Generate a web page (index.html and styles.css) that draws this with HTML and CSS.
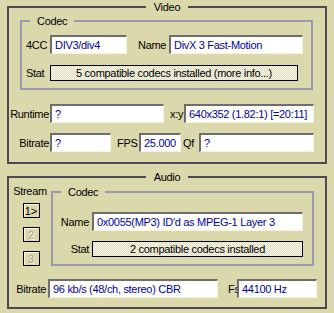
FILE: index.html
```html
<!DOCTYPE html>
<html lang="en">
<head>
  <meta charset="UTF-8">
  <title>Media Info</title>
  <link rel="stylesheet" href="styles.css">
</head>
<body>

  <fieldset class="group">
    <legend class="group-title">Video</legend>

    <fieldset class="codec codec-video">
      <legend class="codec-title">Codec</legend>
      <div class="row">
        <label class="lbl lbl-4cc">4CC</label>
        <input class="field w-4cc" type="text" value="DIV3/div4" readonly>
        <label class="lbl lbl-name">Name</label>
        <input class="field w-vname" type="text" value="DivX 3 Fast-Motion" readonly>
      </div>
      <div class="row row-stat">
        <label class="lbl lbl-4cc">Stat</label>
        <div class="stat w-vstat">5 compatible codecs installed (more info...)</div>
      </div>
    </fieldset>

    <div class="row row-runtime">
      <label class="lbl lbl-main">Runtime</label>
      <input class="field w-runtime" type="text" value="?" readonly>
      <label class="lbl lbl-xy">x:y</label>
      <input class="field w-xy" type="text" value="640x352 (1.82:1) [=20:11]" readonly>
    </div>
    <div class="row row-bitrate">
      <label class="lbl lbl-main">Bitrate</label>
      <input class="field w-vbitrate" type="text" value="?" readonly>
      <label class="lbl lbl-fps">FPS</label>
      <input class="field w-fps" type="text" value="25.000" readonly>
      <label class="lbl lbl-qf">Qf</label>
      <input class="field w-qf" type="text" value="?" readonly>
    </div>
  </fieldset>

  <fieldset class="group group-audio">
    <legend class="group-title">Audio</legend>

    <div class="audio-top">
      <div class="streams">
        <span class="streams-title">Stream</span>
        <button class="stream-btn">1&gt;</button>
        <button class="stream-btn" disabled>2</button>
        <button class="stream-btn" disabled>3</button>
      </div>

      <fieldset class="codec codec-audio">
        <legend class="codec-title">Codec</legend>
        <div class="row">
          <label class="lbl lbl-audio">Name</label>
          <input class="field w-aname" type="text" value="0x0055(MP3) ID'd as MPEG-1 Layer 3" readonly>
        </div>
        <div class="row row-astat">
          <label class="lbl lbl-audio">Stat</label>
          <div class="stat w-aname">2 compatible codecs installed</div>
        </div>
      </fieldset>
    </div>

    <div class="row row-abitrate">
      <label class="lbl lbl-abitrate">Bitrate</label>
      <input class="field w-abitrate" type="text" value="96 kb/s (48/ch, stereo) CBR" readonly>
      <label class="lbl lbl-fs">Fs</label>
      <input class="field w-fs" type="text" value="44100 Hz" readonly>
    </div>
  </fieldset>

</body>
</html>
```

FILE: styles.css
```css
body {
  margin: 0;
  background: #dbd8ac;
  font-family: "Liberation Sans", Arial, sans-serif;
  font-size: 11px;
  letter-spacing: -0.3px;
  color: #000;
}

fieldset {
  min-width: 0;
  margin: 0;
  padding: 0;
}

legend {
  line-height: 14px;
}

.group {
  width: 320px;
  box-sizing: border-box;
  margin-left: 7px;
  border: 2px solid #4b4b55;
  padding: 0 0 10px 0;
}

.group-audio {
  margin-top: 6px;
  padding-bottom: 9px;
}

.group-title {
  margin: 0 auto;
  padding: 0 8px;
}

.codec {
  border: 2px solid #9a9aae;
  padding: 7px 0 7px 0;
}

.codec-video {
  margin: 0 12px 0 11px;
}

.codec-title {
  margin-left: 8px;
  padding: 0 7px;
}

.row {
  display: flex;
  align-items: center;
}

.row-stat { margin-top: 11px; }
.row-runtime { margin-top: 14px; }
.row-bitrate { margin-top: 10px; }
.row-astat { margin-top: 10px; }
.row-abitrate { margin-top: 13px; }

.lbl {
  flex: none;
  white-space: nowrap;
}

.lbl-4cc { margin-left: 4px; width: 24px; }
.lbl-name { margin-left: 11px; width: 31px; }
.lbl-main { width: 40px; text-align: right; margin-right: 1px; }
.lbl-xy { margin-left: 6px; width: 14px; }
.lbl-fps { margin-left: 6px; width: 22px; }
.lbl-qf { margin-left: 2px; width: 16px; }
.lbl-audio { width: 36px; text-align: right; margin-right: 3px; }
.lbl-abitrate { width: 37px; text-align: right; margin-right: 2px; }
.lbl-fs { margin-left: 10px; width: 9px; }

.field {
  flex: none;
  box-sizing: border-box;
  height: 19px;
  margin: 0;
  padding: 0 0 0 3px;
  background: #fff;
  color: #0000a8;
  font: inherit;
  letter-spacing: inherit;
  border-style: solid;
  border-width: 2px 1px 1px 2px;
  border-color: #6e6e72 #f6f4dc #f6f4dc #6e6e72;
  outline: none;
}

.w-4cc { width: 77px; }
.w-vname { width: 134px; }
.w-runtime { width: 114px; }
.w-xy { width: 130px; }
.w-vbitrate { width: 61px; }
.w-fps { width: 42px; }
.w-qf { width: 115px; }
.w-aname { width: 211px; }
.w-abitrate { width: 170px; }
.w-fs { width: 80px; }

.stat {
  flex: none;
  box-sizing: border-box;
  height: 16px;
  line-height: 14px;
  border: 1px solid #000;
  text-align: center;
  background: repeating-conic-gradient(#fbfaef 0 25%, #dedbbb 0 50%) 0 0 / 2px 2px;
}

.w-vstat { width: 248px; }

.audio-top {
  display: flex;
  align-items: flex-start;
}

.streams {
  flex: none;
  width: 42px;
  display: flex;
  flex-direction: column;
  align-items: center;
}

.streams-title {
  line-height: 14px;
}

.stream-btn {
  box-sizing: border-box;
  width: 17px;
  height: 15px;
  margin: 5px 0 0 2px;
  padding: 0;
  font: inherit;
  letter-spacing: 0;
  line-height: 12px;
  color: #000;
  background: #dbd8ac;
  border: 1px solid #000;
  box-shadow: inset 1px 1px #fbfaf0;
}

.stream-btn + .stream-btn {
  margin-top: 9px;
}

.stream-btn:disabled {
  color: #a5a38a;
  text-shadow: 1px 1px #fbfaf0;
}

.codec-audio {
  flex: 1;
  margin: 1px 11px 0 0;
  padding-top: 13px;
}
```
